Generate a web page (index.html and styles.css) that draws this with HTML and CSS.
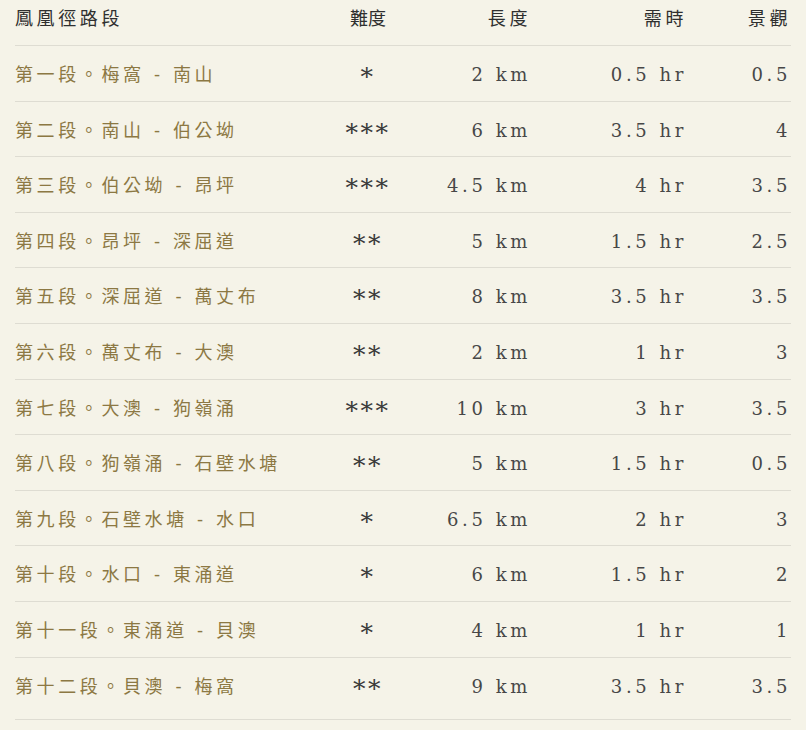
FILE: index.html
```html
<!DOCTYPE html>
<html lang="zh-Hant">
<head>
<meta charset="utf-8">
<title>鳳凰徑路段</title>
<link rel="stylesheet" href="styles.css">
</head>
<body>
<div class="page">
<table class="trail">
  <colgroup>
    <col class="c-name"><col class="c-diff"><col class="c-len"><col class="c-time"><col class="c-view">
  </colgroup>
  <thead>
    <tr>
      <th class="name">鳳凰徑路段</th>
      <th class="diff tight">難度</th>
      <th class="num">長度</th>
      <th class="num">需時</th>
      <th class="num">景觀</th>
    </tr>
  </thead>
  <tbody>
    <tr><td class="name">第一段。梅窩 - 南山</td><td class="diff">*</td><td class="num">2 km</td><td class="num">0.5 hr</td><td class="num">0.5</td></tr>
    <tr><td class="name">第二段。南山 - 伯公坳</td><td class="diff">***</td><td class="num">6 km</td><td class="num">3.5 hr</td><td class="num">4</td></tr>
    <tr><td class="name">第三段。伯公坳 - 昂坪</td><td class="diff">***</td><td class="num">4.5 km</td><td class="num">4 hr</td><td class="num">3.5</td></tr>
    <tr><td class="name">第四段。昂坪 - 深屈道</td><td class="diff">**</td><td class="num">5 km</td><td class="num">1.5 hr</td><td class="num">2.5</td></tr>
    <tr><td class="name">第五段。深屈道 - 萬丈布</td><td class="diff">**</td><td class="num">8 km</td><td class="num">3.5 hr</td><td class="num">3.5</td></tr>
    <tr><td class="name">第六段。萬丈布 - 大澳</td><td class="diff">**</td><td class="num">2 km</td><td class="num">1 hr</td><td class="num">3</td></tr>
    <tr><td class="name">第七段。大澳 - 狗嶺涌</td><td class="diff">***</td><td class="num">10 km</td><td class="num">3 hr</td><td class="num">3.5</td></tr>
    <tr><td class="name">第八段。狗嶺涌 - 石壁水塘</td><td class="diff">**</td><td class="num">5 km</td><td class="num">1.5 hr</td><td class="num">0.5</td></tr>
    <tr><td class="name">第九段。石壁水塘 - 水口</td><td class="diff">*</td><td class="num">6.5 km</td><td class="num">2 hr</td><td class="num">3</td></tr>
    <tr><td class="name">第十段。水口 - 東涌道</td><td class="diff">*</td><td class="num">6 km</td><td class="num">1.5 hr</td><td class="num">2</td></tr>
    <tr><td class="name">第十一段。東涌道 - 貝澳</td><td class="diff">*</td><td class="num">4 km</td><td class="num">1 hr</td><td class="num">1</td></tr>
    <tr><td class="name">第十二段。貝澳 - 梅窩</td><td class="diff">**</td><td class="num">9 km</td><td class="num">3.5 hr</td><td class="num">3.5</td></tr>
  </tbody>
</table>
</div>
</body>
</html>
```

FILE: styles.css
```css
html, body {
  margin: 0;
  padding: 0;
  background: #f5f3e8;
}

.page {
  padding: 0 15px;
}

.trail {
  width: 776px;
  table-layout: fixed;
  border-collapse: collapse;
  font-family: "DejaVu Serif", "Noto Sans CJK TC", serif;
  font-size: 18px;
  letter-spacing: 3.6px;
  color: #474747;
}

.c-name { width: 275px; }
.c-diff { width: 156px; }
.c-len { width: 85px; }
.c-time { width: 156px; }
.c-view { width: 104px; }

.trail th {
  font-weight: normal;
  color: #2f2f2f;
  padding: 6px 0 14px;
  line-height: 25px;
  border-bottom: 1px solid #dedcd2;
  white-space: nowrap;
}

.trail td {
  padding: 17px 0 13px;
  line-height: 24.6px;
  border-bottom: 1px solid #dedcd2;
  white-space: nowrap;
}

.trail tbody tr:last-child td {
  padding-bottom: 20px;
}

.trail .name {
  text-align: left;
}

.trail td.name {
  color: #8c7843;
}

.trail .diff {
  text-align: center;
}

.trail td.diff {
  font-size: 25px;
  letter-spacing: 2.5px;
  padding-top: 19px;
  padding-bottom: 11px;
  color: #3a3a3a;
}

.trail tbody tr:last-child td.diff {
  padding-bottom: 18px;
}

.trail .tight {
  letter-spacing: 0;
}

.trail .num {
  text-align: right;
}
```
